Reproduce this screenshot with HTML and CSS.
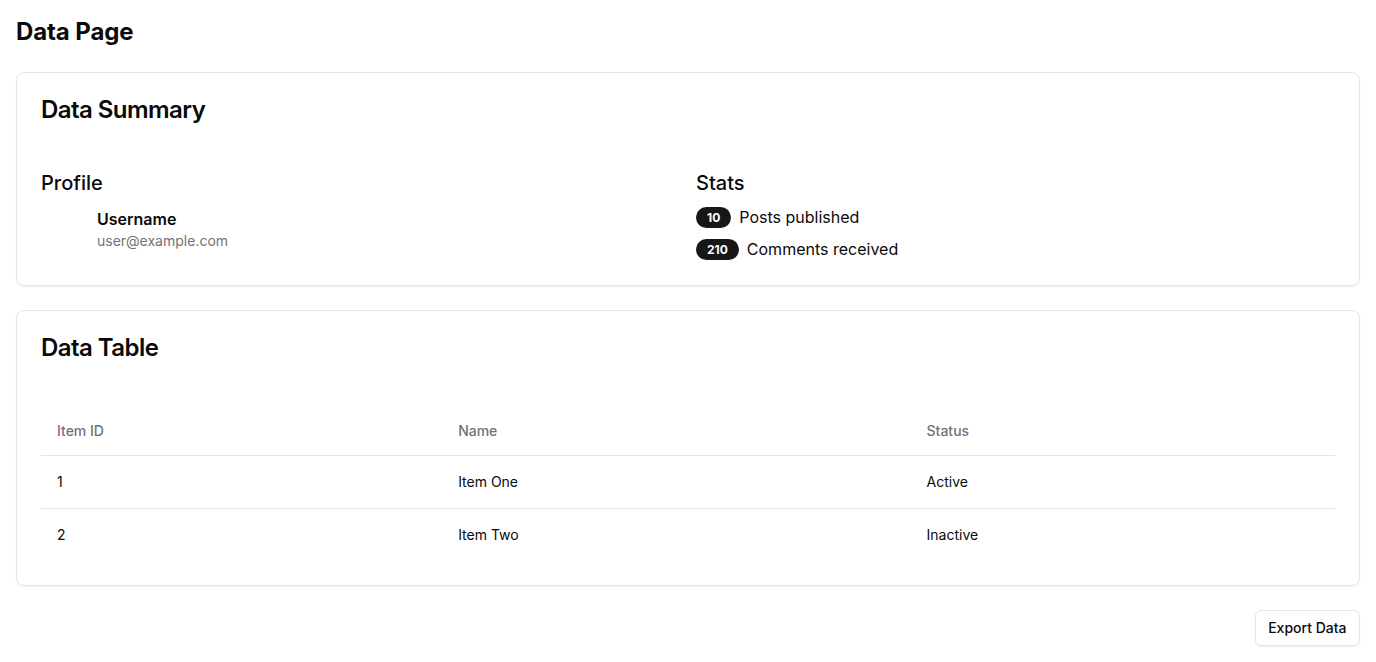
FILE: index.html
```html
<!DOCTYPE html>
<html>
<head>
<meta charset="utf-8">
<link rel="stylesheet" href="styles.css">
</head>
<body>
<main class="page">
  <h1 class="page-title">Data Page</h1>

  <section class="card">
    <h2 class="card-title">Data Summary</h2>
    <div class="summary-grid">
      <div class="col">
        <h3 class="section-title">Profile</h3>
        <div class="profile">
          <div class="avatar"></div>
          <div class="profile-text">
            <div class="username">Username</div>
            <div class="email">user@example.com</div>
          </div>
        </div>
      </div>
      <div class="col">
        <h3 class="section-title">Stats</h3>
        <div class="stats">
          <div class="stat"><span class="badge">10</span><span class="stat-label">Posts published</span></div>
          <div class="stat"><span class="badge">210</span><span class="stat-label">Comments received</span></div>
        </div>
      </div>
    </div>
  </section>

  <section class="card card-table">
    <h2 class="card-title">Data Table</h2>
    <table class="table">
      <thead>
        <tr><th class="c1">Item ID</th><th class="c2">Name</th><th>Status</th></tr>
      </thead>
      <tbody>
        <tr><td>1</td><td>Item One</td><td>Active</td></tr>
        <tr><td>2</td><td>Item Two</td><td>Inactive</td></tr>
      </tbody>
    </table>
  </section>

  <div class="actions">
    <button class="btn">Export Data</button>
  </div>
</main>
</body>
</html>
```

FILE: styles.css
```css
* { box-sizing: border-box; }
html, body { margin: 0; padding: 0; background: #fff; }
body {
  font-family: Inter, "Noto Sans", sans-serif;
  color: #0a0a0a;
}
.page {
  padding: 16px;
  display: flex;
  flex-direction: column;
  gap: 24px;
}
.page-title {
  margin: 0;
  font-size: 24px;
  line-height: 32px;
  font-weight: 700;
  letter-spacing: -0.1px;
}
.card {
  border: 1px solid #e5e5e5;
  border-radius: 8px;
  box-shadow: 0 1px 2px rgba(0,0,0,0.05);
  padding: 24px;
}
.card-table { padding-bottom: 23px; }
.card-title {
  margin: 0;
  font-size: 24px;
  line-height: 26px;
  font-weight: 600;
  letter-spacing: -0.55px;
}
.summary-grid {
  margin-top: 46px;
  display: grid;
  grid-template-columns: 1fr 1fr;
  gap: 16px;
}
.section-title {
  margin: 0;
  font-size: 20px;
  line-height: 28px;
  font-weight: 500;
}
.profile {
  display: flex;
  gap: 16px;
  margin-top: 10px;
}
.avatar { width: 40px; height: 40px; }
.username { font-size: 16px; line-height: 24px; font-weight: 600; }
.email { font-size: 14px; line-height: 20px; color: #737373; }
.stats { margin-top: 8px; display: flex; flex-direction: column; gap: 8px; }
.stat { display: flex; align-items: center; gap: 8px; height: 24px; }
.badge {
  background: #171717;
  color: #fff;
  font-size: 12px;
  font-weight: 700;
  border-radius: 999px;
  padding: 0 11px;
  height: 21px;
  display: inline-flex;
  align-items: center;
}
.stat-label { font-size: 16px; }
.table {
  margin-top: 46px;
  width: 100%;
  border-collapse: collapse;
  font-size: 14px;
}
.table th, .table td {
  text-align: left;
  line-height: 20px;
}
.table th { font-weight: 500; color: #71717a; padding: 14px 16px; }
.table thead tr { border-bottom: 1px solid #e5e5e5; }
.table tbody tr + tr { border-top: 1px solid #e5e5e5; }
.table tbody td { height: 53px; padding: 16px; }
.c1 { width: 31%; }
.c2 { width: 36.2%; }
.actions { display: flex; justify-content: flex-end; }
.btn {
  font-family: inherit;
  font-size: 14px;
  font-weight: 500;
  color: #0a0a0a;
  background: #fff;
  border: 1px solid #e5e5e5;
  border-radius: 6px;
  height: 36px;
  padding: 0 12.5px;
  box-shadow: 0 1px 2px rgba(0,0,0,0.05);
}
```
